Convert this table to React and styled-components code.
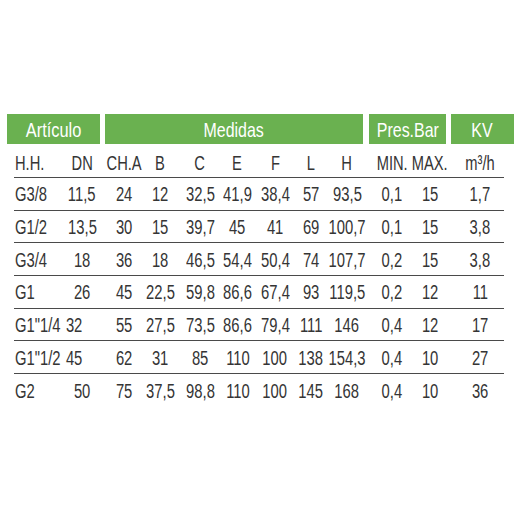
import React from "react";
import styled, { createGlobalStyle } from "styled-components";

const Global = createGlobalStyle`
  html, body { margin: 0; padding: 0; background: #fff; }
  body { font-family: "Liberation Sans", Arial, sans-serif; color: #353535; }
`;

const Page = styled.div`
  width: 520px;
  height: 520px;
  padding-top: 114px;
  box-sizing: border-box;
`;

const GroupBar = styled.div`
  display: flex;
  gap: 5px;
  margin-left: 7px;
`;

const Group = styled.div`
  width: ${(p) => p.$w}px;
  margin-left: ${(p) => p.$ml || 0}px;
  height: 30px;
  background: #6ab150;
  color: #fff;
  font-size: 21px;
  display: flex;
  align-items: center;
  justify-content: center;
  padding-top: 1px;
  box-sizing: border-box;
`;

const Condensed = styled.span`
  display: inline-block;
  white-space: nowrap;
  transform: scaleX(${(p) => p.$sx || 0.74});
  transform-origin: ${(p) => (p.$left ? "left center" : "center")};
`;

const Table = styled.div`
  margin-left: 14px;
  width: 490px;
`;

const cols = "48px 40px 44px 28px 52px 23px 52px 20px 52px 38px 38px 62px";

const Row = styled.div`
  display: grid;
  grid-template-columns: ${cols};
  height: ${(p) => (p.$head ? 34 : 32.67)}px;
  box-sizing: border-box;
  border-bottom: ${(p) => (p.$last ? "none" : "1px solid #4a4a4a")};
  font-size: ${(p) => (p.$head ? 21 : 20)}px;
  padding-top: ${(p) => (p.$head ? 4 : 2)}px;
`;

const Cell = styled.div`
  display: flex;
  align-items: center;
  justify-content: ${(p) => (p.$left ? "flex-start" : "center")};
  padding-left: ${(p) => (p.$left ? 1 : 0)}px;
  padding-right: ${(p) => p.$shift || 0}px;
  white-space: nowrap;
  min-width: 0;
`;

const heads = ["H.H.", "DN", "CH.A", "B", "C", "E", "F", "L", "H", "MIN.", "MAX.", "m³/h"];

const data = [
  ["G3/8", "11,5", "24", "12", "32,5", "41,9", "38,4", "57", "93,5", "0,1", "15", "1,7"],
  ["G1/2", "13,5", "30", "15", "39,7", "45", "41", "69", "100,7", "0,1", "15", "3,8"],
  ["G3/4", "18", "36", "18", "46,5", "54,4", "50,4", "74", "107,7", "0,2", "15", "3,8"],
  ["G1", "26", "45", "22,5", "59,8", "86,6", "67,4", "93", "119,5", "0,2", "12", "11"],
  ['G1"1/4', "32", "55", "27,5", "73,5", "86,6", "79,4", "111", "146", "0,4", "12", "17"],
  ['G1"1/2', "45", "62", "31", "85", "110", "100", "138", "154,3", "0,4", "10", "27"],
  ["G2", "50", "75", "37,5", "98,8", "110", "100", "145", "168", "0,4", "10", "36"],
];

export default function App() {
  return (
    <>
      <Global />
      <Page>
        <GroupBar>
          <Group $w={93}><Condensed $sx={0.78}>Artículo</Condensed></Group>
          <Group $w={258}><Condensed $sx={0.76}>Medidas</Condensed></Group>
          <Group $w={77} $ml={1}><Condensed $sx={0.76}>Pres.Bar</Condensed></Group>
          <Group $w={63}><Condensed $sx={0.76}>KV</Condensed></Group>
        </GroupBar>
        <Table>
          <Row $head>
            {heads.map((h, i) => (
              <Cell key={i} $left={i === 0}>
                <Condensed $left={i === 0} $sx={0.7}>{h}</Condensed>
              </Cell>
            ))}
          </Row>
          {data.map((r, ri) => (
            <Row key={ri} $last={ri === data.length - 1}>
              {r.map((v, i) => (
                <Cell
                  key={i}
                  $left={i === 0}
                  $shift={i === 1 && r[0].includes('"') ? 16 : 0}
                >
                  <Condensed $left={i === 0}>{v}</Condensed>
                </Cell>
              ))}
            </Row>
          ))}
        </Table>
      </Page>
    </>
  );
}
